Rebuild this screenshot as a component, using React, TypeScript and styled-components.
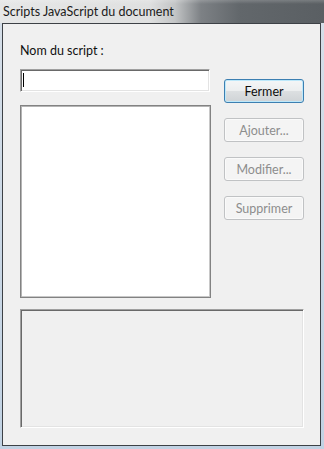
import React from "react";
import styled, { createGlobalStyle } from "styled-components";

const Global = createGlobalStyle`
  html, body { margin: 0; padding: 0; background: #c8d5e2; }
  body { font-family: "Lato", "Noto Sans", sans-serif; }
  * { box-sizing: border-box; }
`;

const Window = styled.div`
  width: 324px;
  height: 449px;
  display: flex;
  flex-direction: column;
  background: #cbd8e5;
  overflow: hidden;
`;

const TitleBar = styled.div`
  height: 23px;
  flex: none;
  display: flex;
  align-items: center;
  padding-left: 3px;
  background:
    linear-gradient(180deg, rgba(255,255,255,0.18) 0px, rgba(255,255,255,0) 4px),
    linear-gradient(90deg, #e6e7e7 0%, #dfe0e0 46%, #c3c5c6 54%, #7d8185 62%, #62676b 74%, #5a5f63 100%);
`;

const TitleText = styled.span`
  font-size: 12.5px;
  color: #1b1b1b;
  white-space: nowrap;
`;

const Frame = styled.div`
  flex: 1;
  display: flex;
  padding: 0 3px 3px 2px;
  background: linear-gradient(180deg, #d5dee8, #c1d2e3);
`;

const Client = styled.div`
  flex: 1;
  border: 1px solid #3d4146;
  background: #f0f0f0;
  padding: 19px 15px 16px 17px;
  display: flex;
  flex-direction: column;
`;

const Label = styled.div`
  font-size: 12.5px;
  line-height: 16px;
  height: 16px;
  color: #111;
`;

const Main = styled.div`
  margin-top: 10px;
  display: grid;
  grid-template-columns: 191px 80px;
  column-gap: 13px;
`;

const LeftCol = styled.div`
  display: flex;
  flex-direction: column;
  gap: 13px;
`;

const TextInput = styled.div`
  width: 190px;
  height: 23px;
  background: #fff;
  border-top: 1px solid #a0a0a0;
  border-left: 1px solid #a0a0a0;
  border-bottom: 1px solid #ffffff;
  border-right: 1px solid #ffffff;
  box-shadow: inset 1px 1px 0 #696969, inset -1px -1px 0 #e3e3e3;
  position: relative;
`;

const Caret = styled.span`
  position: absolute;
  left: 2px;
  top: 3px;
  width: 1px;
  height: 14px;
  background: #000;
`;

const ListBox = styled.div`
  width: 191px;
  height: 193px;
  background: #fff;
  border: 1px solid #828282;
  box-shadow: inset 1px 1px 0 #b4b4b4, inset -1px -1px 0 #c8c8c8;
`;

const RightCol = styled.div`
  padding-top: 10px;
  display: flex;
  flex-direction: column;
  gap: 15px;
`;

const Button = styled.button<{ $primary?: boolean }>`
  width: 80px;
  height: 24px;
  padding: 0;
  font-family: inherit;
  font-size: 12.5px;
  border-radius: 3px;
  border: 1px solid ${(p) => (p.$primary ? "#3c7fb1" : "#c0c2c4")};
  color: ${(p) => (p.$primary ? "#0d0d0d" : "#8d8d8d")};
  background: ${(p) =>
    p.$primary
      ? "linear-gradient(180deg, #f4f6f7 0%, #eceeef 48%, #dcdfe1 52%, #cfd3d6 100%)"
      : "#f4f4f4"};
  box-shadow: ${(p) =>
    p.$primary ? "inset 0 0 0 1px #bde8fa" : "inset 0 0 0 1px #fafafa"};
`;

const Panel = styled.div`
  margin-top: 11px;
  width: 284px;
  height: 119px;
  background: #f0f0f0;
  border-top: 1px solid #a0a0a0;
  border-left: 1px solid #a0a0a0;
  border-bottom: 1px solid #ffffff;
  border-right: 1px solid #ffffff;
  box-shadow: inset 1px 1px 0 #696969, inset -1px -1px 0 #e3e3e3;
`;

export default function App() {
  return (
    <>
      <Global />
      <Window>
        <TitleBar>
          <TitleText>Scripts JavaScript du document</TitleText>
        </TitleBar>
        <Frame>
          <Client>
            <Label>Nom du script :</Label>
            <Main>
              <LeftCol>
                <TextInput>
                  <Caret />
                </TextInput>
                <ListBox />
              </LeftCol>
              <RightCol>
                <Button $primary>Fermer</Button>
                <Button disabled>Ajouter...</Button>
                <Button disabled>Modifier...</Button>
                <Button disabled>Supprimer</Button>
              </RightCol>
            </Main>
            <Panel />
          </Client>
        </Frame>
      </Window>
    </>
  );
}
